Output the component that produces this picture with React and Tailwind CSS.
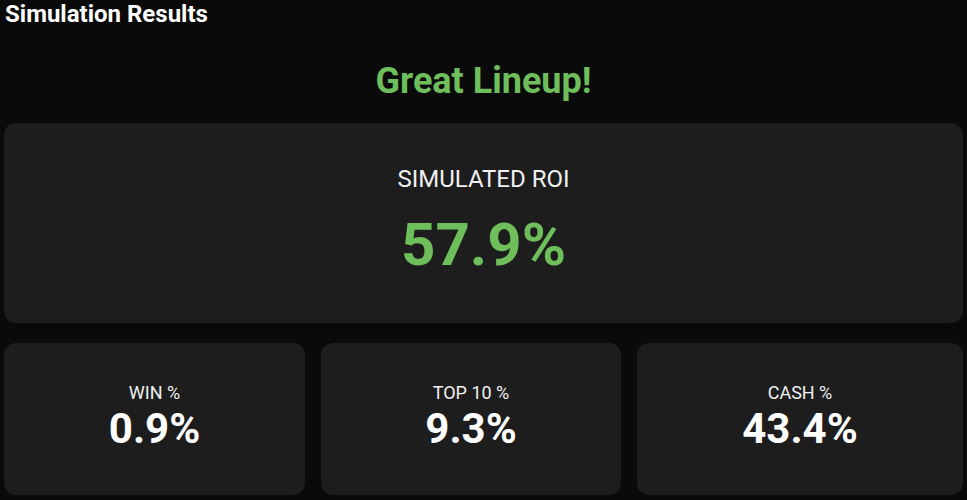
const Stat = ({ label, value }) => (
  <div className="flex h-[152px] flex-col items-center rounded-xl bg-[#1d1d1d] pt-[38px]">
    <div className="text-[18px] leading-6 text-[#f0f0f0]">{label}</div>
    <div className="text-[42px] font-bold leading-[48px] text-white">{value}</div>
  </div>
);

export default function App() {
  return (
    <div className="min-h-[500px] bg-[#0a0a0a] px-1 font-['Roboto',sans-serif] text-white">
      <h1 className="pl-[1px] text-2xl font-bold leading-7">Simulation Results</h1>

      <div className="mt-[33px] text-center text-4xl font-bold leading-10 text-[#6ebf5c]">
        Great Lineup!
      </div>

      <div className="mt-[22px] flex h-[200px] flex-col items-center rounded-xl bg-[#1d1d1d] pt-10">
        <div className="text-2xl leading-8 text-[#f0f0f0]">SIMULATED ROI</div>
        <div className="mt-5 text-6xl font-bold leading-[60px] text-[#6ebf5c]">57.9%</div>
      </div>

      <div className="mt-5 grid grid-cols-[301px_300px_1fr] gap-4">
        <Stat label="WIN %" value="0.9%" />
        <Stat label="TOP 10 %" value="9.3%" />
        <Stat label="CASH %" value="43.4%" />
      </div>
    </div>
  );
}
